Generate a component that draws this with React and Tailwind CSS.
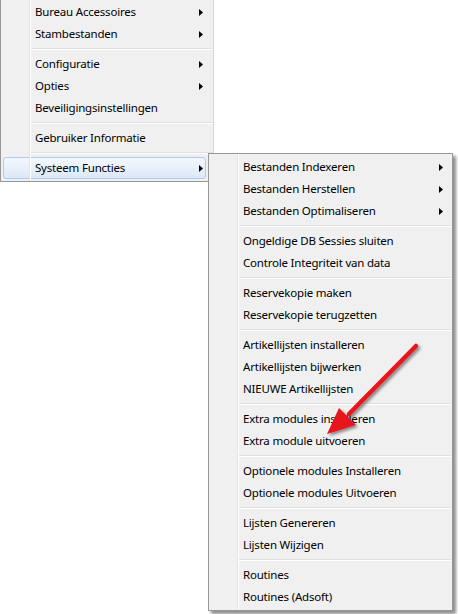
import React from "react";

const mainItems = [
  { label: "Bureau Accessoires", sub: true },
  { label: "Stambestanden", sub: true },
  "sep",
  { label: "Configuratie", sub: true },
  { label: "Opties", sub: true },
  { label: "Beveiligingsinstellingen" },
  "sep",
  { label: "Gebruiker Informatie" },
  "sep",
  { label: "Systeem Functies", sub: true, active: true },
];

const subItems = [
  { label: "Bestanden Indexeren", sub: true },
  { label: "Bestanden Herstellen", sub: true },
  { label: "Bestanden Optimaliseren", sub: true },
  "sep",
  { label: "Ongeldige DB Sessies sluiten" },
  { label: "Controle Integriteit van data" },
  "sep",
  { label: "Reservekopie maken" },
  { label: "Reservekopie terugzetten" },
  "sep",
  { label: "Artikellijsten installeren" },
  { label: "Artikellijsten bijwerken" },
  { label: "NIEUWE Artikellijsten" },
  "sep",
  { label: "Extra modules installeren" },
  { label: "Extra module uitvoeren" },
  "sep",
  { label: "Optionele modules Installeren" },
  { label: "Optionele modules Uitvoeren" },
  "sep",
  { label: "Lijsten Genereren" },
  { label: "Lijsten Wijzigen" },
  "sep",
  { label: "Routines" },
  { label: "Routines (Adsoft)" },
];

const Caret = () => (
  <svg width="4" height="7" viewBox="0 0 4 7" className="block">
    <path d="M0 0 L4 3.5 L0 7 Z" fill="#000" />
  </svg>
);

const MenuList = ({ items, outer, inner }) => (
  <>
    {items.map((item, i) =>
      item === "sep" ? (
        <div key={i} className="h-[8px] flex items-center pl-[30px] pr-[1px]">
          <div className="w-full h-[2px] border-t border-[#e0e0e0] border-b border-b-white" />
        </div>
      ) : (
        <div key={i} className={"h-[22px] pl-[2px] " + outer}>
          <div
            className={
              "h-[22px] flex items-center pl-[31px] rounded-[3px] border " +
              inner +
              " " +
              (item.active
                ? "border-[#aecbf0] bg-gradient-to-b from-[#f4f8fd] to-[#dce8f8]"
                : "border-transparent")
            }
          >
            <span className="flex-1 text-black leading-none">{item.label}</span>
            {item.sub && <Caret />}
          </div>
        </div>
      )
    )}
  </>
);

export default function App() {
  return (
    <div
      className="relative w-[458px] h-[614px] bg-white overflow-hidden text-[11.5px] tracking-[-0.2px]"
      style={{ fontFamily: '"Segoe UI", "Noto Sans", sans-serif' }}
    >
      {/* main menu */}
      <div className="relative w-[214px] mt-[-1px] bg-[#f0f0f0] border-l border-b border-r border-[#979797] border-r-[#d8d8d8] py-[2px]">
        <div className="absolute top-0 bottom-0 left-[28px] w-[2px] border-l border-[#e2e3e3] border-r border-r-white" />
        <MenuList items={mainItems} outer="pr-[7px]" inner="pr-[2px]" />
      </div>

      {/* submenu */}
      <div className="absolute left-[208px] top-[153px] w-[245px] bg-[#f0f0f0] border border-[#979797] py-[2px] shadow-[3px_3px_3px_rgba(0,0,0,0.45)]">
        <div className="absolute top-0 bottom-0 left-[28px] w-[2px] border-l border-[#e2e3e3] border-r border-r-white" />
        <MenuList items={subItems} outer="pr-[2px]" inner="pr-[6px]" />
      </div>

      {/* red arrow annotation */}
      <svg className="absolute left-0 top-0" width="458" height="614" viewBox="0 0 458 614">
        <defs>
          <filter id="sh" x="-20%" y="-20%" width="140%" height="140%">
            <feGaussianBlur in="SourceAlpha" stdDeviation="1.5" />
            <feOffset dx="2" dy="2" />
            <feComponentTransfer>
              <feFuncA type="linear" slope="0.45" />
            </feComponentTransfer>
            <feMerge>
              <feMergeNode />
              <feMergeNode in="SourceGraphic" />
            </feMerge>
          </filter>
        </defs>
        <g filter="url(#sh)">
          <line x1="416" y1="346" x2="349" y2="414" stroke="#e8141a" strokeWidth="4.5" strokeLinecap="round" />
          <path d="M327 434 L339 408 L356 425 Z" fill="#e8141a" />
        </g>
      </svg>
    </div>
  );
}
